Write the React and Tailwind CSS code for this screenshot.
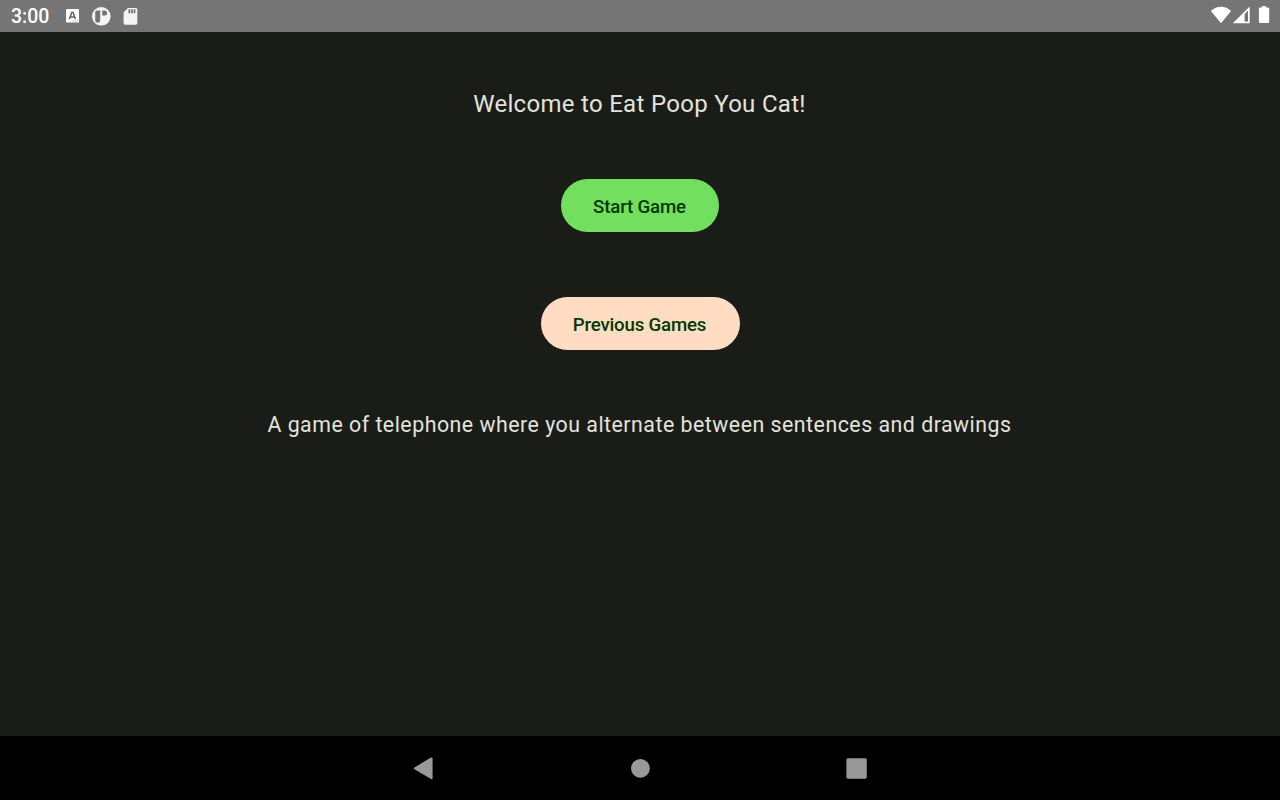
function KeyboardIcon() {
  return (
    <svg className="h-8 w-4 shrink-0" viewBox="0 0 16 32" fill="none">
      <rect x="2" y="9" width="13" height="13.6" rx="1.2" fill="#fff" />
      <path d="M5.4 19 7.7 12.6h1.4l2.3 6.4M6.6 17h3.7" stroke="#626262" strokeWidth="1.5" />
      <path d="M8.8 20.9h5" stroke="#999" strokeWidth=".9" strokeDasharray="1.2 .7" />
    </svg>
  );
}

function BadgeIcon() {
  return (
    <svg className="h-8 w-5 shrink-0" viewBox="0 0 20 32">
      <circle cx="10.3" cy="16.3" r="9.3" fill="#f5f5f5" />
      <path d="M4.2 12.4q0-1.9 1.9-1.9h3.1v9.9q0 2.4-2.5 2.4t-2.5-2.4z" fill="#757575" />
      <path d="M11.2 10.5h2.4a2.5 2.5 0 0 1 0 5h-2.4z" fill="#757575" />
    </svg>
  );
}

function SdCardIcon() {
  return (
    <svg className="h-8 w-4 shrink-0" viewBox="0 0 16 32">
      <path d="M6 8h7.8q1.5 0 1.5 1.5v13.6q0 1.6-1.5 1.6H3.1q-1.5 0-1.5-1.6V12.5z" fill="#f5f5f5" />
      <path d="M7.3 9.2v4M9.9 9.2v4M12.5 9.2v4" stroke="#757575" strokeWidth="1.8" />
    </svg>
  );
}

function StatusBar() {
  return (
    <header className="flex h-8 shrink-0 items-center bg-[#757575] pl-[11px] pr-[9px] text-white">
      <span className="w-[53px] pt-px text-[19.5px] font-medium leading-8">3:00</span>
      <KeyboardIcon />
      <span className="w-[11px]" />
      <BadgeIcon />
      <span className="w-[11px]" />
      <SdCardIcon />
      <svg className="ml-auto h-8 w-[62px]" viewBox="1209 0 62 32" fill="#fff">
        <path d="M1221 23.3 1210.9 11.1Q1215.2 6.8 1221 6.8T1231.1 11.1z" />
        <path fillRule="evenodd" d="M1249.7 6.6V23.3H1232.8zM1248 10.5 1244.6 13.9V21.6H1248z" />
        <path d="M1262 6h4v1.6h2q1.2 0 1.2 1.2v13q0 1.2-1.2 1.2h-7.9q-1.2 0-1.2-1.2v-13q0-1.2 1.2-1.2h1.9z" />
      </svg>
    </header>
  );
}

function NavigationBar() {
  return (
    <nav className="flex h-16 shrink-0 items-center justify-center gap-48 bg-black">
      <button aria-label="Back" className="h-6 w-6">
        <svg viewBox="0 0 24 24" fill="#999">
          <path d="M2 11.8Q1.4 12.4 2.1 13L19 23.1Q20.6 23.9 20.6 22.3V2.5Q20.6.9 19 1.6L2.4 11.4Q2.1 11.6 2 11.8z" />
        </svg>
      </button>
      <button aria-label="Home" className="h-6 w-6">
        <svg viewBox="0 0 24 24" fill="#999">
          <circle cx="12.4" cy="12.4" r="9.4" />
        </svg>
      </button>
      <button aria-label="Recent apps" className="h-6 w-6">
        <svg viewBox="0 0 24 24" fill="#999">
          <rect x="2.4" y="2.3" width="20.4" height="20.4" rx="1.6" />
        </svg>
      </button>
    </nav>
  );
}

export default function App() {
  return (
    <div className="flex h-screen flex-col bg-[#1a1c18] font-['Roboto',sans-serif]">
      <StatusBar />
      <main className="flex flex-1 flex-col items-center pt-14 text-[#e2e3dc]">
        <h1 className="pr-px text-[24px] leading-8 tracking-[0.3px]">Welcome to Eat Poop You Cat!</h1>
        <button className="mt-[59px] h-[53px] w-[158px] rounded-full bg-[#72df5e] pr-px pt-0.5 text-[18.67px] font-medium tracking-[-0.17px] text-[#003a00]">
          Start Game
        </button>
        <button className="ml-px mt-[65px] h-[53px] w-[199px] rounded-full bg-[#ffdcc2] pr-0.5 pt-0.5 text-[18.67px] font-medium tracking-[-0.18px] text-[#003a00]">
          Previous Games
        </button>
        <p className="mt-[59px] pr-px text-[21.33px] leading-8 tracking-[0.5px]">
          A game of telephone where you alternate between sentences and drawings
        </p>
      </main>
      <NavigationBar />
    </div>
  );
}
